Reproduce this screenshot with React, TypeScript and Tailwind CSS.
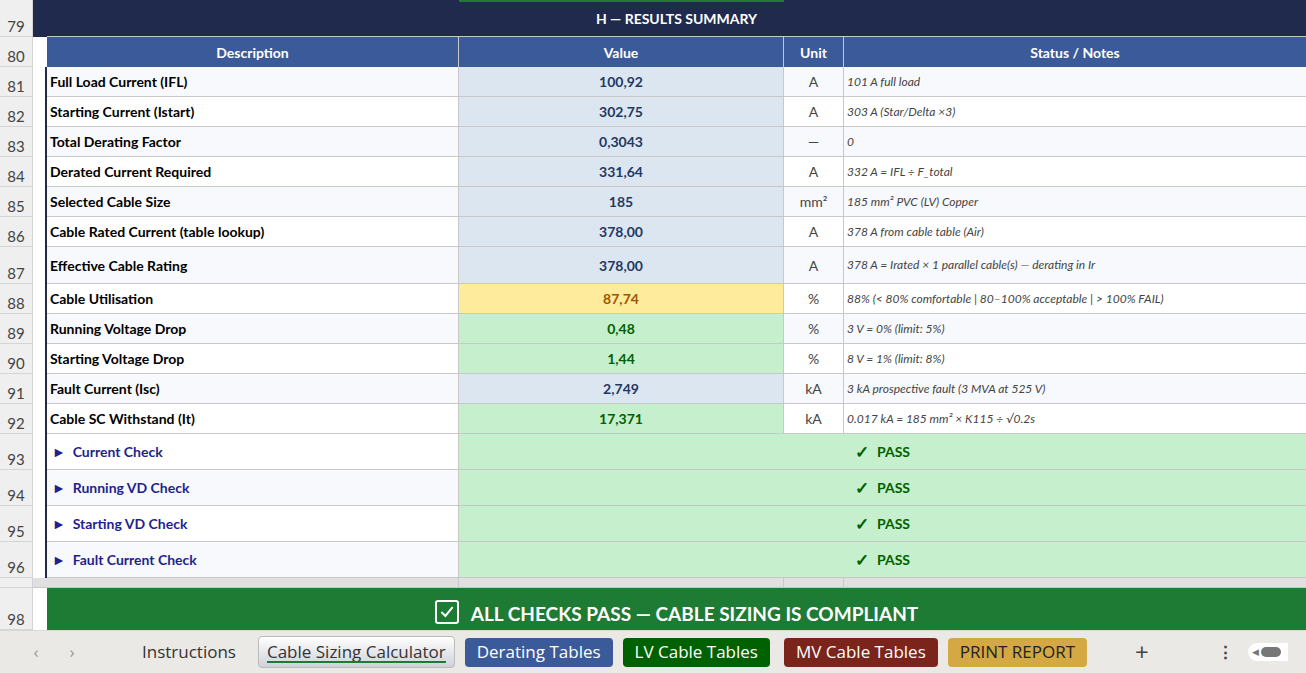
import React from "react";

type Row = { n: number; h: number; desc: string; val: string; unit: React.ReactNode; note: string; bg: string; color: string; descBg?: string };

const blue = "bg-[#dce6f1]";
const rows: Row[] = [
  { n: 81, h: 30, desc: "Full Load Current  (IFL)", val: "100,92", unit: "A", note: "101 A  full load", bg: blue, color: "text-[#1f3864]", descBg: "bg-[#f7f9fc]" },
  { n: 82, h: 30, desc: "Starting Current  (Istart)", val: "302,75", unit: "A", note: "303 A  (Star/Delta ×3)", bg: blue, color: "text-[#1f3864]" },
  { n: 83, h: 30, desc: "Total Derating Factor", val: "0,3043", unit: "—", note: "0", bg: blue, color: "text-[#1f3864]", descBg: "bg-[#f7f9fc]" },
  { n: 84, h: 30, desc: "Derated Current Required", val: "331,64", unit: "A", note: "332 A  = IFL ÷ F_total", bg: blue, color: "text-[#1f3864]" },
  { n: 85, h: 30, desc: "Selected Cable Size", val: "185", unit: <>mm²</>, note: "185 mm²  PVC (LV)  Copper", bg: blue, color: "text-[#1f3864]", descBg: "bg-[#f7f9fc]" },
  { n: 86, h: 30, desc: "Cable Rated Current  (table lookup)", val: "378,00", unit: "A", note: "378 A  from cable table (Air)", bg: blue, color: "text-[#1f3864]" },
  { n: 87, h: 37, desc: "Effective Cable Rating", val: "378,00", unit: "A", note: "378 A  = Irated × 1 parallel cable(s) — derating in Ir", bg: blue, color: "text-[#1f3864]", descBg: "bg-[#f7f9fc]" },
  { n: 88, h: 30, desc: "Cable Utilisation", val: "87,74", unit: "%", note: "88%  (< 80% comfortable | 80–100% acceptable | > 100% FAIL)", bg: "bg-[#ffeb9c]", color: "text-[#9c5700]" },
  { n: 89, h: 30, desc: "Running Voltage Drop", val: "0,48", unit: "%", note: "3 V  = 0%  (limit: 5%)", bg: "bg-[#c6efce]", color: "text-[#006100]", descBg: "bg-[#f7f9fc]" },
  { n: 90, h: 30, desc: "Starting Voltage Drop", val: "1,44", unit: "%", note: "8 V  = 1%  (limit: 8%)", bg: "bg-[#c6efce]", color: "text-[#006100]" },
  { n: 91, h: 30, desc: "Fault Current  (Isc)", val: "2,749", unit: "kA", note: "3 kA  prospective fault (3 MVA at 525 V)", bg: blue, color: "text-[#1f3864]", descBg: "bg-[#f7f9fc]" },
  { n: 92, h: 30, desc: "Cable SC Withstand  (It)", val: "17,371", unit: "kA", note: "0.017 kA  = 185 mm² × K115 ÷ √0.2s", bg: "bg-[#c6efce]", color: "text-[#006100]" },
];

const checks = ["Current Check", "Running VD Check", "Starting VD Check", "Fault Current Check"];

function Num({ n, h }: { n: number | string; h: number }) {
  return (
    <div style={{ height: h }} className="w-[33px] shrink-0 bg-[#efefef] border-b border-r border-[#d4d4d4] text-[#444] text-[15px] flex items-end justify-center pb-[2px] leading-none">
      {n}
    </div>
  );
}

export default function App() {
  return (
    <div className="w-[1306px] h-[673px] overflow-hidden bg-white flex flex-col text-[14px]" style={{ fontFamily: "Lato, 'Open Sans', sans-serif" }}>
      <div className="h-[630px] overflow-hidden flex flex-col">
        {/* row 79 */}
        <div className="flex">
          <Num n={79} h={37} />
          <div className="w-[14px] bg-[#1f2a4d]" />
          <div className="flex-1 bg-[#1f2a4d] relative flex items-center justify-center text-white font-bold text-[14px] border-b border-[#c8c8c8]">
            <div className="absolute top-0 left-[412px] w-[325px] h-[2px] bg-[#1e7b34]" />
            H — RESULTS SUMMARY
          </div>
        </div>
        {/* row 80 */}
        <div className="flex">
          <Num n={80} h={30} />
          <div className="w-[14px] bg-white" />
          <div className="flex flex-1 bg-[#3b5a99] text-white font-bold">
            <div className="w-[412px] border-r border-[#c8c8c8] flex items-center justify-center">Description</div>
            <div className="w-[325px] border-r border-[#c8c8c8] flex items-center justify-center">Value</div>
            <div className="w-[60px] border-r border-[#c8c8c8] flex items-center justify-center">Unit</div>
            <div className="flex-1 flex items-center justify-center">Status / Notes</div>
          </div>
        </div>
        {rows.map((r) => (
          <div key={r.n} className="flex" style={{ height: r.h }}>
            <Num n={r.n} h={r.h} />
            <div className="w-[14px] bg-white border-r-2 border-[#1f2a4d]" />
            <div className={`w-[412px] border-r border-b border-[#c8c8c8] flex items-center pl-[3px] font-bold text-black ${r.descBg ?? "bg-white"}`}>{r.desc}</div>
            <div className={`w-[325px] border-r border-b border-[#c8c8c8] flex items-center justify-center font-bold ${r.bg} ${r.color}`}>{r.val}</div>
            <div className={`w-[60px] border-r border-b border-[#c8c8c8] flex items-center justify-center text-[#444] ${r.descBg ?? "bg-white"}`}>{r.unit}</div>
            <div className={`flex-1 border-b border-[#c8c8c8] flex items-center pl-[3px] italic text-[12px] text-[#444] ${r.descBg ?? "bg-white"}`}>{r.note}</div>
          </div>
        ))}
        {checks.map((c, i) => (
          <div key={c} className="flex h-[36px]">
            <Num n={93 + i} h={36} />
            <div className="w-[14px] bg-white border-r-2 border-[#1f2a4d]" />
            <div className={`w-[412px] border-r border-b border-[#c8c8c8] flex items-center pl-[5px] font-bold text-[#1f1f8f] ${i % 2 === 0 ? "bg-white" : "bg-[#f7f9fc]"}`}>► &nbsp;{c}</div>
            <div className="flex-1 bg-[#c6efce] border-b border-[#c8c8c8] flex items-center justify-center font-bold text-[#006100]">
              <span className="text-[17px] mr-[8px]">✓</span>PASS
            </div>
          </div>
        ))}
        {/* row 97 */}
        <div className="flex h-[10px]">
          <Num n="" h={10} />
          <div className="w-[14px] bg-[#e0e0e0] border-b border-[#c8c8c8]" />
          <div className="w-[412px] bg-[#e0e0e0] border-r border-b border-[#c8c8c8]" />
          <div className="w-[325px] bg-[#e0e0e0] border-r border-b border-[#c8c8c8]" />
          <div className="w-[60px] bg-[#e0e0e0] border-r border-b border-[#c8c8c8]" />
          <div className="flex-1 bg-[#e0e0e0] border-b border-[#c8c8c8]" />
        </div>
        {/* row 98 */}
        <div className="flex flex-1">
          <Num n={98} h={42} />
          <div className="w-[14px] bg-white" />
          <div className="flex-1 bg-[#1e7b34] flex items-start justify-center pt-[12px] text-white font-bold text-[19px] gap-3">
            <span className="w-[24px] h-[24px] border-2 border-white rounded-[3px] flex items-center justify-center">
              <svg viewBox="0 0 20 20" className="w-[16px] h-[16px]"><path d="M3 10l5 5 9-11" fill="none" stroke="white" strokeWidth="2.5" /></svg>
            </span>
            ALL CHECKS PASS — CABLE SIZING IS COMPLIANT
          </div>
        </div>
      </div>
      {/* tab bar */}
      <div className="h-[43px] bg-[#ebe9e6] border-t border-[#d8d8d8] flex items-center text-[17px]" style={{ fontFamily: "'Open Sans', Lato, sans-serif" }}>
        <span className="w-[36px] text-center text-[#999] ml-[18px]">‹</span>
        <span className="w-[36px] text-center text-[#999]">›</span>
        <span className="ml-[42px] px-[10px] text-[#333]">Instructions</span>
        <span className="ml-[12px] h-[32px] px-[8px] bg-gradient-to-b from-white to-[#cfd2d8] rounded-[4px] border border-[#bbb] flex items-center text-[#333] relative">
          Cable Sizing Calculator
          <span className="absolute left-[8px] right-[8px] bottom-[4px] h-[2px] bg-[#1e7b34]" />
        </span>
        <span className="ml-[10px] h-[29px] px-[12px] rounded-[4px] bg-[#3b5a99] text-white flex items-center">Derating Tables</span>
        <span className="ml-[10px] h-[29px] px-[12px] rounded-[4px] bg-[#006100] text-white flex items-center">LV Cable Tables</span>
        <span className="ml-[14px] h-[29px] px-[12px] rounded-[4px] bg-[#7b241c] text-white flex items-center">MV Cable Tables</span>
        <span className="ml-[10px] h-[29px] px-[12px] rounded-[4px] bg-[#d4a843] text-[#222] flex items-center">PRINT REPORT</span>
        <span className="ml-[48px] text-[24px] text-[#444]">+</span>
        <span className="ml-[68px] text-[#444] font-bold">⋮</span>
        <span className="ml-[14px] w-[40px] h-[18px] rounded-l-full bg-white flex items-center pl-[4px]">
          <span className="text-[9px] text-[#777]">◀</span>
          <span className="ml-[2px] w-[20px] h-[10px] rounded-full bg-[#777]" />
        </span>
      </div>
    </div>
  );
}
